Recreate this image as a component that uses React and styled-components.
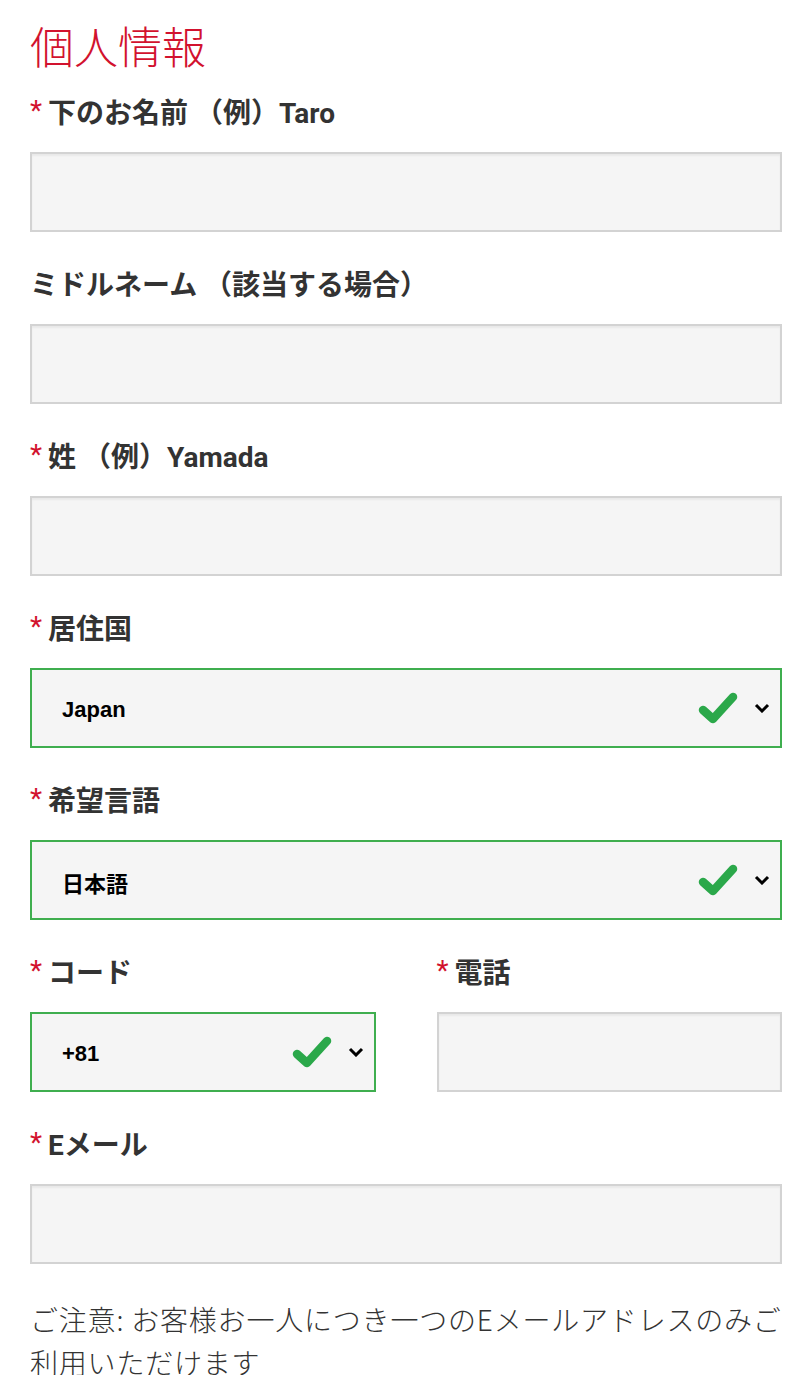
import React from 'react';
import styled, { createGlobalStyle } from 'styled-components';

const GlobalStyle = createGlobalStyle`
  body {
    margin: 0;
    background: #fff;
    font-family: Roboto, "Noto Sans CJK JP", sans-serif;
  }
`;

const Page = styled.div`
  padding: 19px 29px 0 30px;
  width: 811px;
  box-sizing: border-box;
`;

const Title = styled.h1`
  margin: 0 0 23px;
  font-family: "Noto Sans CJK JP", sans-serif;
  font-weight: 300;
  font-size: 44px;
  line-height: 52px;
  color: #d2122e;
`;

const Field = styled.div`
  display: flex;
  flex-direction: column;
  margin-bottom: 34px;
`;

const Label = styled.label`
  display: flex;
  align-items: center;
  height: 36px;
  padding-bottom: 3px;
  box-sizing: border-box;
  margin-bottom: 22px;
  font-family: Roboto, "Noto Sans CJK JP", sans-serif;
  font-weight: 700;
  font-size: 28px;
  color: #333;
  white-space: nowrap;
`;

const Star = styled.span`
  color: #d2122e;
  font-weight: 400;
  margin-right: 6px;
`;

const Input = styled.div`
  height: 80px;
  box-sizing: border-box;
  background: #f5f5f5;
  border: 2px solid #d3d3d3;
  box-shadow: inset 0 2px 2px rgba(0, 0, 0, 0.05);
`;

const SelectBox = styled.div`
  height: 80px;
  box-sizing: border-box;
  background: #f5f5f5;
  border: 2px solid #3fae4f;
  display: flex;
  align-items: center;
  padding: 0 10px 0 30px;
`;

const Value = styled.span`
  flex: 1;
  font-family: "Liberation Sans", "Noto Sans CJK JP", sans-serif;
  font-weight: 700;
  font-size: 22px;
  color: #000;
  padding-top: 4px;
`;

const Check = styled.svg`
  width: 42px;
  height: 34px;
  margin-right: 15px;
`;

const Chevron = styled.svg`
  width: 16px;
  height: 10px;
`;

const Row = styled.div`
  display: grid;
  grid-template-columns: 1fr 1fr;
  column-gap: 61px;
`;

const Note = styled.p`
  margin: 23px 0 0;
  font-family: "Noto Sans CJK JP", sans-serif;
  font-weight: 300;
  font-size: 28px;
  line-height: 43px;
  letter-spacing: 0.8px;
  color: #333;
  white-space: nowrap;
`;

const CheckIcon = () => (
  <Check viewBox="0 0 42 34">
    <polyline
      points="6,19 16,28 36,6"
      fill="none"
      stroke="#2ba84a"
      strokeWidth="8.5"
      strokeLinecap="round"
      strokeLinejoin="round"
    />
  </Check>
);

const ChevronIcon = () => (
  <Chevron viewBox="0 0 16 10">
    <polyline points="2,2 8,8 14,2" fill="none" stroke="#000" strokeWidth="3" />
  </Chevron>
);

const Select = ({ value }) => (
  <SelectBox>
    <Value>{value}</Value>
    <CheckIcon />
    <ChevronIcon />
  </SelectBox>
);

const FieldLabel = ({ required, children }) => (
  <Label>
    {required && <Star>*</Star>}
    {children}
  </Label>
);

export default function App() {
  return (
    <>
      <GlobalStyle />
      <Page>
        <Title>個人情報</Title>
        <Field>
          <FieldLabel required>下のお名前 （例）Taro</FieldLabel>
          <Input />
        </Field>
        <Field>
          <FieldLabel>ミドルネーム （該当する場合）</FieldLabel>
          <Input />
        </Field>
        <Field>
          <FieldLabel required>姓 （例）Yamada</FieldLabel>
          <Input />
        </Field>
        <Field>
          <FieldLabel required>居住国</FieldLabel>
          <Select value="Japan" />
        </Field>
        <Field>
          <FieldLabel required>希望言語</FieldLabel>
          <Select value="日本語" />
        </Field>
        <Row>
          <Field>
            <FieldLabel required>コード</FieldLabel>
            <Select value="+81" />
          </Field>
          <Field>
            <FieldLabel required>電話</FieldLabel>
            <Input />
          </Field>
        </Row>
        <Field>
          <FieldLabel required>Eメール</FieldLabel>
          <Input />
        </Field>
        <Note>
          ご注意: お客様お一人につき一つのEメールアドレスのみご
          <br />
          利用いただけます
        </Note>
      </Page>
    </>
  );
}
